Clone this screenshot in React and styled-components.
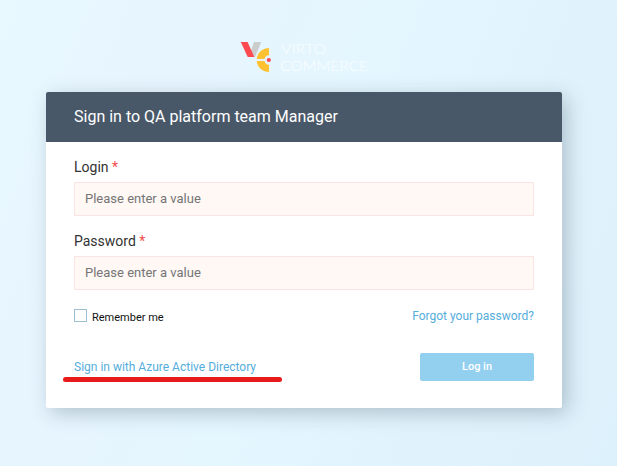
import React from "react";
import styled, { createGlobalStyle } from "styled-components";

const GlobalStyle = createGlobalStyle`
  * { box-sizing: border-box; }
  body {
    margin: 0;
    font-family: Roboto, "Liberation Sans", sans-serif;
  }
`;

const Page = styled.main`
  display: flex;
  flex-direction: column;
  align-items: center;
  width: 100%;
  height: 466px;
  padding: 36px 9px 0 0;
  overflow: hidden;
  background: linear-gradient(112deg, #e8f9ff 0%, #e7f5fe 24%, #e4f6fe 50%, #e0f3fc 75%, #ddf1fc 100%);
`;

const Logo = styled.svg`
  display: block;
  flex: none;
  width: 140px;
  height: 40px;
  margin: 0 0 16px 8px;
`;

const LogoText = styled.text`
  fill: #fbfeff;
  font: 300 13.3px Lato, sans-serif;
`;

const Card = styled.section`
  width: 516px;
  height: 316px;
  flex: none;
  border-radius: 2px;
  background: #fff;
  box-shadow: 5px 5px 20px rgba(65, 88, 105, 0.32);
`;

const Header = styled.h1`
  display: flex;
  align-items: center;
  height: 50px;
  margin: 0;
  padding: 0 28px 2px;
  border-radius: 2px 2px 0 0;
  background: #485868;
  color: #fff;
  font-size: 16px;
  font-weight: 400;
`;

const Form = styled.form`
  padding: 15px 28px 0;
`;

const Field = styled.label`
  display: block;
  height: 74px;
  color: #333;
  font-size: 14px;
  line-height: 20px;
`;

const Required = styled.span`
  color: #f34d4d;
`;

const Input = styled.input`
  display: block;
  width: 100%;
  height: 34px;
  margin-top: 5px;
  padding: 0 10px 2px;
  border: 1px solid #fae5e2;
  border-radius: 0;
  outline: 0;
  background: #fff8f5;
  font: 13px Roboto, sans-serif;

  &::placeholder { color: #757575; opacity: 1; }
`;

const Row = styled.div`
  display: flex;
  align-items: flex-start;
  justify-content: space-between;
`;

const Options = styled(Row)`
  height: 48px;
  padding-top: 4px;
`;

const Remember = styled.label`
  display: flex;
  gap: 5px;
  color: #111;
  font-size: 11px;
  line-height: 16px;
`;

const Checkbox = styled.input`
  appearance: none;
  width: 13px;
  height: 13px;
  margin: 0;
  border: 1px solid #9dbfd4;
  background: #fff;
`;

const Link = styled.a`
  color: #55addc;
  font-size: 12px;
  line-height: 14px;
  text-decoration: none;
`;

const Directory = styled.div`
  position: relative;
  padding-top: 6px;
  line-height: 14px;
`;

const Marker = styled.span`
  position: absolute;
  left: -11px;
  top: 24px;
  width: 219px;
  height: 5px;
  border-radius: 3px;
  background: #e81b1b;
`;

const Submit = styled.button`
  width: 114px;
  height: 28px;
  padding: 0 0 1px;
  border: 0;
  border-radius: 2px;
  background: #93cfef;
  color: #fff;
  font: 500 11px Roboto, sans-serif;
`;

const RememberText = styled.span`
  padding-top: 1px;
`;

function BrandLogo() {
  return (
    <Logo viewBox="0 0 140 40" role="img" aria-label="Virto Commerce">
      <path d="M16 6h7.3l-6.3 15H11z" fill="#cbcccc" />
      <path d="M2.8 6h6.8l6.7 15H9.7z" fill="#fd4950" />
      <path d="M31 12v7.3a5 5 0 0 0-4.6 3.7h-7.7C19.4 16.7 24 12.3 31 12z" fill="#fdc132" />
      <path d="M31 36v-7.3a5 5 0 0 1-4.6-3.7h-7.7C19.4 31.3 24 35.7 31 36z" fill="#fdc132" />
      <circle cx="30.8" cy="24" r="2.1" fill="#fd4950" />
      <LogoText x="43" y="18.3" textLength="45" lengthAdjust="spacingAndGlyphs">VIRTO</LogoText>
      <LogoText x="42.2" y="34.6" textLength="87.8" lengthAdjust="spacingAndGlyphs">COMMERCE</LogoText>
    </Logo>
  );
}

function TextField({ label, type }) {
  return (
    <Field>
      {label} <Required>*</Required>
      <Input type={type} placeholder="Please enter a value" />
    </Field>
  );
}

export default function App() {
  return (
    <>
      <GlobalStyle />
      <Page>
        <BrandLogo />
        <Card>
          <Header>Sign in to QA platform team Manager</Header>
          <Form>
            <TextField label="Login" type="text" />
            <TextField label="Password" type="password" />
            <Options>
              <Remember>
                <Checkbox type="checkbox" />
                <RememberText>Remember me</RememberText>
              </Remember>
              <Link href="#">Forgot your password?</Link>
            </Options>
            <Row>
              <Directory>
                <Link href="#">Sign in with Azure Active Directory</Link>
                <Marker />
              </Directory>
              <Submit type="button">Log in</Submit>
            </Row>
          </Form>
        </Card>
      </Page>
    </>
  );
}
